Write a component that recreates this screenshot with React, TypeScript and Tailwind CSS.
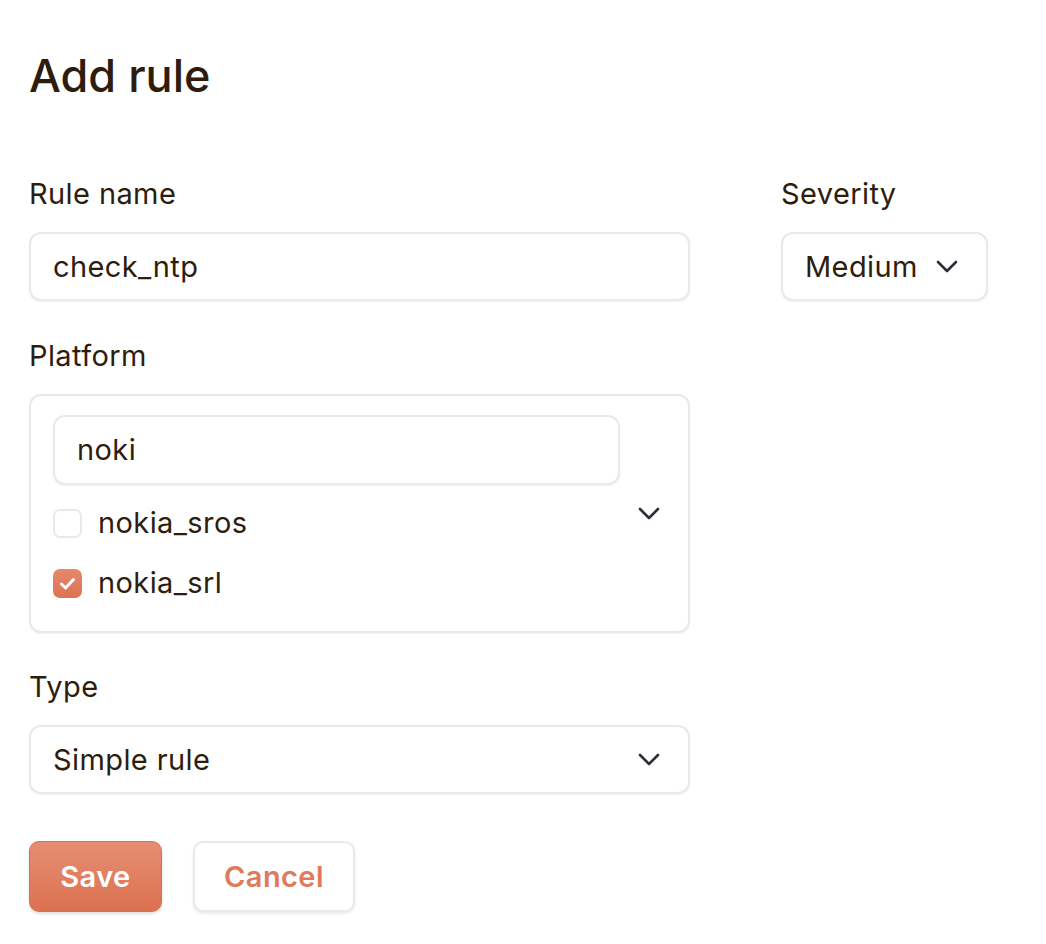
import React from "react";

const Chevron = ({ className = "" }: { className?: string }) => (
	<svg width="22" height="13" viewBox="0 0 22 13" fill="none" className={className}>
		<path d="M2 2l9 9 9-9" stroke="#2b2f36" strokeWidth="2.6" strokeLinecap="round" strokeLinejoin="round" />
	</svg>
);

const Label = ({ children }: { children: React.ReactNode }) => (
	<div className="text-[29px] leading-[34px] tracking-[0.4px] mb-[21px]">{children}</div>
);

const box = "bg-white border-2 border-[#ebe9e7] rounded-[12px] shadow-[0_1px_2px_rgba(0,0,0,0.06)]";
const txt = "text-[29px] tracking-[0.4px]";

export default function App() {
	return (
		<div className="min-h-screen bg-white px-[29px] pt-[46px] text-[#2e1d0d]" style={{ fontFamily: "Inter, 'Noto Sans', sans-serif" }}>
			<h1 className="text-[45px] leading-[60px] font-medium mb-[71px]">Add rule</h1>

			<div className="flex gap-[91px]">
				<div className="w-[661px]">
					<Label>Rule name</Label>
					<div className={`${box} ${txt} h-[69px] flex items-center px-[22px]`}>check_ntp</div>

					<div className="mt-[38px]">
						<Label>Platform</Label>
						<div className={`${box} h-[239px] flex items-center pl-[22px] pr-[28px]`}>
							<div className="flex-1 self-start pt-[19px]">
								<div className={`${box} ${txt} w-[567px] h-[70px] flex items-center px-[22px]`}>noki</div>
								<div className="mt-[16px] flex flex-col gap-[16px]">
									<div className={`${txt} h-[44px] flex items-center gap-[16px]`}>
										<span className="w-[29px] h-[29px] rounded-[7px] border-2 border-[#ebe9e7] bg-white" />
										nokia_sros
									</div>
									<div className={`${txt} h-[44px] flex items-center gap-[16px]`}>
										<span className="w-[29px] h-[29px] rounded-[7px] bg-gradient-to-b from-[#e6886b] to-[#dc7352] flex items-center justify-center">
											<svg width="17" height="13" viewBox="0 0 17 13" fill="none">
												<path d="M2.5 7l4 4 8-8.5" stroke="white" strokeWidth="3" strokeLinecap="round" strokeLinejoin="round" />
											</svg>
										</span>
										nokia_srl
									</div>
								</div>
							</div>
							<Chevron />
						</div>
					</div>

					<div className="mt-[37px]">
						<Label>Type</Label>
						<div className={`${box} ${txt} h-[69px] flex items-center justify-between pl-[22px] pr-[28px]`}>
							<span>Simple rule</span>
							<Chevron />
						</div>
					</div>

					<div className="mt-[47px] flex gap-[31px]">
						<button className={`${txt} w-[133px] h-[71px] rounded-[10px] border border-[#d66f50] bg-gradient-to-b from-[#e68e72] to-[#db7150] text-white font-semibold shadow-[0_2px_3px_rgba(0,0,0,0.12)]`}>
							Save
						</button>
						<button className={`${txt} w-[162px] h-[71px] rounded-[10px] border-2 border-[#ebe9e7] bg-white text-[#e07a5c] font-semibold shadow-[0_2px_3px_rgba(0,0,0,0.08)]`}>
							Cancel
						</button>
					</div>
				</div>

				<div className="w-[207px]">
					<Label>Severity</Label>
					<div className={`${box} ${txt} h-[69px] flex items-center justify-between pl-[22px] pr-[28px]`}>
						<span>Medium</span>
						<Chevron />
					</div>
				</div>
			</div>
		</div>
	);
}
